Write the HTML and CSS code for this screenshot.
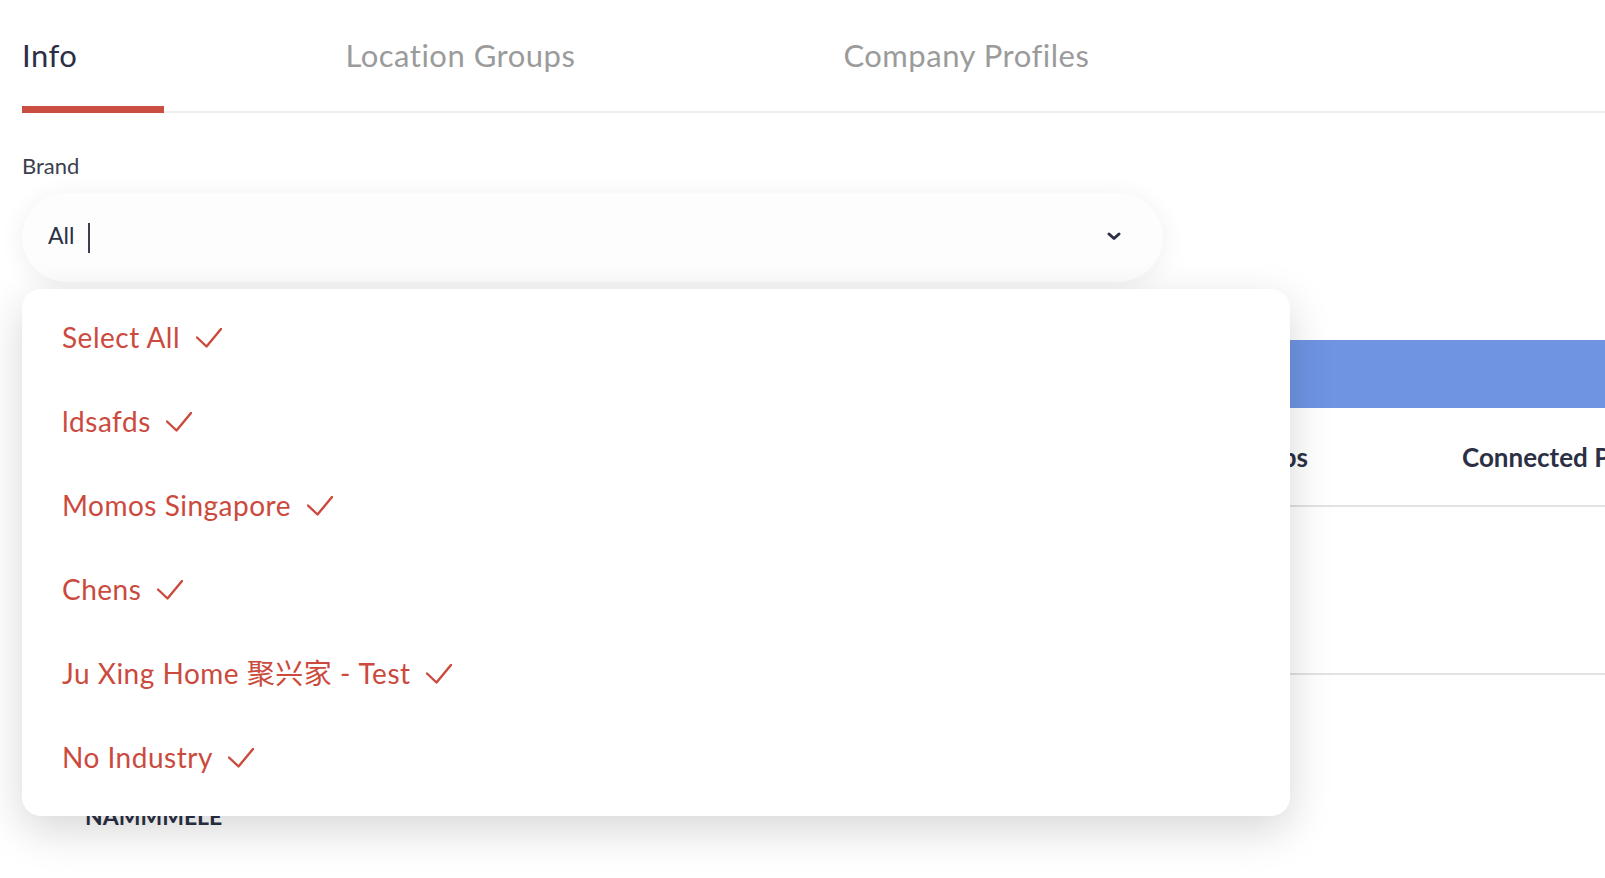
FILE: index.html
```html
<!DOCTYPE html>
<html lang="en">
<head>
    <meta charset="UTF-8">
    <meta name="viewport" content="width=device-width, initial-scale=1.0">
    <title>Info</title>
    <link rel="stylesheet" href="styles.css">
</head>
<body>
    <div class="page">
        <nav class="tabs">
            <a class="tab active">Info</a>
            <a class="tab">Location Groups</a>
            <a class="tab">Company Profiles</a>
        </nav>

        <section class="brand-field">
            <label class="field-label">Brand</label>
            <div class="select-wrap">
                <div class="select">
                    <span class="select-value">All</span>
                    <span class="text-caret"></span>
                    <svg class="chevron" viewBox="0 0 14 9" width="14" height="9">
                        <polyline points="2,2 7,6.5 12,2" fill="none" stroke="#2b3044" stroke-width="3" stroke-linecap="round" stroke-linejoin="round"/>
                    </svg>
                </div>

                <ul class="dropdown">
                    <li class="option">Select All <svg class="check" viewBox="0 0 26 20" width="26" height="20"><polyline points="1,9.5 10.5,18.5 25,1"/></svg></li>
                    <li class="option">ldsafds <svg class="check" viewBox="0 0 26 20" width="26" height="20"><polyline points="1,9.5 10.5,18.5 25,1"/></svg></li>
                    <li class="option">Momos Singapore <svg class="check" viewBox="0 0 26 20" width="26" height="20"><polyline points="1,9.5 10.5,18.5 25,1"/></svg></li>
                    <li class="option">Chens <svg class="check" viewBox="0 0 26 20" width="26" height="20"><polyline points="1,9.5 10.5,18.5 25,1"/></svg></li>
                    <li class="option">Ju Xing Home 聚兴家 - Test <svg class="check" viewBox="0 0 26 20" width="26" height="20"><polyline points="1,9.5 10.5,18.5 25,1"/></svg></li>
                    <li class="option">No Industry <svg class="check" viewBox="0 0 26 20" width="26" height="20"><polyline points="1,9.5 10.5,18.5 25,1"/></svg></li>
                </ul>
            </div>
        </section>

        <div class="table">
            <div class="table-bar"></div>
            <div class="table-head">
                <div class="cell">Name</div>
                <div class="cell">Brand</div>
                <div class="cell right">Location Groups</div>
                <div class="cell connected">Connected Profiles</div>
            </div>
            <div class="table-row"></div>
            <div class="table-row last">
                <div class="row-name">NAMMMELE</div>
            </div>
        </div>
    </div>
</body>
</html>
```

FILE: styles.css
```css
html, body {
    margin: 0;
    padding: 0;
    overflow: hidden;
    background-color: #ffffff;
}
body {
    font-family: Lato, "Noto Sans CJK SC", sans-serif;
    color: #2b3044;
    width: 1605px;
    height: 878px;
}
.page {
    padding-left: 22px;
}

/* tabs */
.tabs {
    display: flex;
    gap: 268px;
    border-bottom: 2px solid #efefef;
}
.tab {
    position: relative;
    padding: 37px 0;
    font-size: 31px;
    line-height: 37px;
    letter-spacing: 0.5px;
    color: #9b9b9b;
    white-space: nowrap;
}
.tab.active {
    color: #2a2f45;
}
.tab.active::after {
    content: "";
    position: absolute;
    left: 0;
    bottom: -2px;
    width: 142px;
    height: 7px;
    background-color: #c94d40;
}

/* brand select */
.brand-field {
    margin-top: 40px;
}
.field-label {
    display: block;
    font-size: 22px;
    line-height: 25px;
    color: #3b3e4c;
}
.select-wrap {
    position: relative;
    margin-top: 15px;
    width: 1141px;
}
.select {
    display: flex;
    align-items: center;
    height: 89px;
    padding: 0 42px 0 26px;
    border-radius: 45px;
    background-color: #fdfdfd;
    box-shadow: 0 4px 26px rgba(0, 0, 0, 0.07);
    box-sizing: border-box;
}
.select-value {
    font-size: 23px;
    line-height: 28px;
    margin-top: -6px;
    color: #2b3044;
}
.text-caret {
    width: 2px;
    height: 30px;
    margin-left: 14px;
    background-color: #3a3d55;
}
.chevron {
    margin-left: auto;
    margin-top: -2px;
}

/* dropdown */
.dropdown {
    position: absolute;
    top: 96px;
    left: 0;
    z-index: 10;
    width: 1268px;
    margin: 0;
    padding: 6px 0 17px 40px;
    list-style-type: none;
    background-color: #ffffff;
    border-radius: 19px;
    box-shadow: 0 14px 44px rgba(0, 0, 0, 0.16);
    box-sizing: border-box;
}
.option {
    height: 84px;
    font-size: 28px;
    line-height: 84px;
    letter-spacing: 0.5px;
    color: #cb4a3d;
    white-space: nowrap;
}
.check {
    margin-left: 8px;
    fill: none;
    stroke: #cb4a3d;
    stroke-width: 2.4;
    stroke-linecap: round;
    stroke-linejoin: round;
}

/* table behind the dropdown */
.table {
    width: 1800px;
    margin-top: 58px;
}
.table-bar {
    height: 68px;
    background-color: #6f94e2;
}
.table-head {
    display: grid;
    grid-template-columns: 360px 500px 426px 400px;
    align-items: center;
    height: 99px;
    border-bottom: 2px solid #e2e2e2;
    box-sizing: border-box;
    font-size: 26px;
    font-weight: 700;
    color: #2b3044;
}
.cell {
    white-space: nowrap;
}
.cell:first-child {
    padding-left: 63px;
}
.cell.right {
    text-align: right;
}
.cell.connected {
    padding-left: 154px;
}
.table-row {
    height: 168px;
    border-bottom: 2px solid #e2e2e2;
    box-sizing: border-box;
}
.table-row.last {
    height: 200px;
    border-bottom: none;
}
.row-name {
    padding: 127px 0 0 63px;
    font-size: 23px;
    line-height: 28px;
    font-weight: 700;
    color: #2b3044;
}
```
